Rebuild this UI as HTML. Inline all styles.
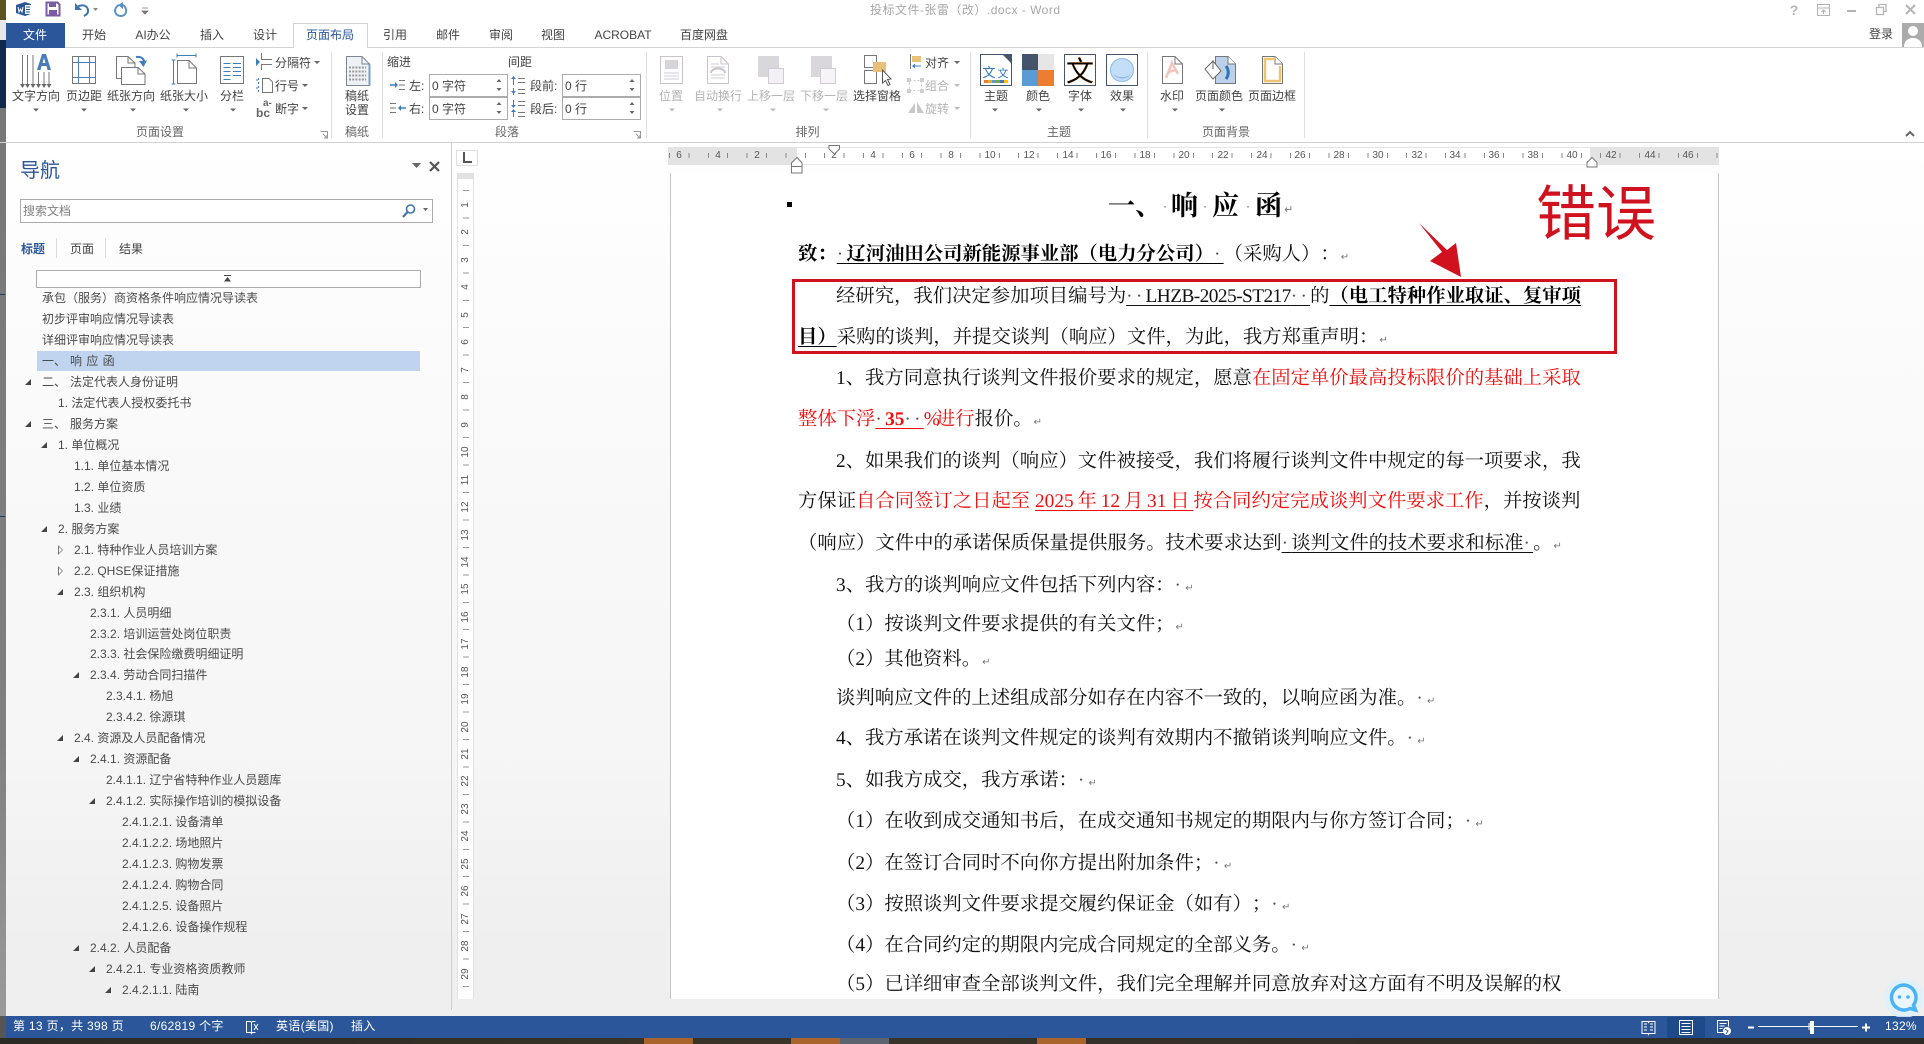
<!DOCTYPE html>
<html lang="zh-CN"><head><meta charset="utf-8"><title>投标文件-张雷（改）.docx - Word</title>
<style>
html,body{margin:0;padding:0;background:#fff}
body{width:1924px;height:1044px;position:relative;overflow:hidden;font-family:"Liberation Sans","Noto Sans CJK SC",sans-serif;font-size:12px;color:#444;text-spacing-trim:space-all}
.abs{position:absolute}
#bg{position:absolute;left:6px;top:143px;width:1918px;height:873px;background:linear-gradient(#fff 0,#fbfbfb 200px,#f8f8f8 400px,#f6f6f6 600px,#efefef 800px,#efefef 873px)}
svg text{font-family:"Liberation Sans","Noto Sans CJK SC",sans-serif;font-size:12px;fill:#444}
svg .c{text-anchor:middle}
svg .g{fill:#666}
svg .d{fill:#b4b4b4}
.t{position:absolute;white-space:pre;line-height:20px;height:20px}
#nav{position:absolute;left:0;top:288px;width:451px}
#nav div{height:20.97px;line-height:20px;white-space:pre;color:#4a4a4a;position:relative}
.l0{padding-left:42px}.l1{padding-left:58px}.l2{padding-left:74px}.l3{padding-left:90px}.l4{padding-left:106px}.l5{padding-left:122px}
i.a{position:absolute;top:7px;width:0;height:0;border-bottom:6px solid #444;border-left:6px solid transparent}
i.o{position:absolute;top:5px;width:0;height:0;border-top:5px solid transparent;border-bottom:5px solid transparent;border-left:5px solid #777}
i.o:after{content:"";position:absolute;left:-4px;top:-3px;border-top:3px solid transparent;border-bottom:3px solid transparent;border-left:3px solid #fafafa}
.w{display:inline-block;width:28px}
.ln{position:absolute;white-space:pre;height:30px;line-height:30px;margin-top:2px;font-family:"Liberation Serif","Noto Serif CJK SC",serif;font-size:19.35px;color:#111;text-rendering:geometricPrecision;text-spacing-trim:space-all;font-kerning:none}
.ln u{text-decoration:underline;text-decoration-thickness:1px;text-underline-offset:3px;text-decoration-skip-ink:none}
.ln b{font-weight:700;color:#000}
.r,.ln b.r{color:#f20d0d}
.p{letter-spacing:.167em;color:#555;font-weight:400}
.e{font-family:"DejaVu Sans",sans-serif;font-size:10px;color:#777;margin-left:1px;font-weight:400}
.ti{position:absolute;font-family:"Liberation Serif","Noto Serif CJK SC",serif;font-weight:700;font-size:27px;line-height:36px;color:#000;top:188px}
.hn{position:absolute;top:149px;font-size:10px;line-height:14px;width:20px;text-align:center;color:#555;margin-left:-10px}
.vn{position:absolute;left:456px;width:20px;text-align:center;font-size:10px;line-height:12px;color:#555;transform:rotate(-90deg);margin-top:-5px}
.s{position:absolute;top:1016px;line-height:20px;color:#fff;white-space:pre;letter-spacing:.3px}
</style></head><body>

<div id="bg"></div>
<div class="abs" style="left:0;top:0;width:6px;height:20px;background:#5c5424"></div>
<div class="abs" style="left:0;top:20px;width:6px;height:20px;background:#e8e8e8"></div>
<div class="abs" style="left:0;top:40px;width:6px;height:68px;background:#10294c"></div>
<div class="abs" style="left:0;top:108px;width:6px;height:908px;background:linear-gradient(#777,#808080 70%,#9a9a9a)"></div>
<div class="abs" style="left:0;top:294px;width:5px;height:1px;background:#1c3e78"></div>
<div class="abs" style="left:0;top:516px;width:5px;height:1px;background:#1c3e78"></div>

<!-- top: title + tabs + ribbon -->
<svg class="abs" style="left:0;top:0" width="1924" height="147" viewBox="0 0 1924 147" fill="none">
<!-- QAT -->
<path d="M16 5l9-3 6 2v10l-6 2-9-3z" fill="#2b579a"/><path d="M25 5h6v9h-6z" fill="#fff"/><path d="M26 7h4M26 9.500h4M26 12h4" stroke="#2b579a"/><path d="M18 7l1 5 1.500-3 1.500 3 1-5" stroke="#fff"/>
<path d="M46.500 2.500h11l2 2v11h-13z" stroke="#7a5ba6" stroke-width="2"/><path d="M49 3v4h7V3" fill="#7a5ba6"/><rect x="49" y="10" width="8" height="5" fill="#7a5ba6"/>
<path d="M76 9c3-5 11-5 12 1 .5 3-2 5-4 6" stroke="#3f75ad" stroke-width="2"/><path d="M75 3v7h7z" fill="#3f75ad"/><path d="M93 8h5l-2.500 3z" fill="#888"/>
<path d="M119 5c-6 3-5 11 2 11 6 0 7-8 2-11" stroke="#5a8fc8" stroke-width="2"/><path d="M123 2v7l-5-4z" fill="#5a8fc8"/>
<path d="M142 8h6M142 11h6l-3 3z" stroke="#777" fill="#777" stroke-width=".8"/>
<!-- title -->
<text x="870" y="14" textLength="190" style="fill:#a8a8a8">投标文件-张雷（改）.docx - Word</text>
<!-- window controls -->
<text x="1794" y="15" class="c" style="font-size:14px;font-weight:700;fill:#b4b4b4">?</text>
<path d="M1817.500 4.500h12v11h-12zM1818 8h12M1823.500 14v-4M1821.500 12l2-2 2 2" stroke="#b4b4b4"/>
<path d="M1847 11h9" stroke="#b4b4b4" stroke-width="2"/>
<path d="M1876.500 7.500h7v7h-7zM1879 7V4.500h7v7h-2.500" stroke="#b4b4b4" stroke-width="1.300"/>
<path d="M1906 5l9 9M1915 5l-9 9" stroke="#b4b4b4" stroke-width="2"/>
<!-- tabs -->
<path d="M6 47.500H293.500V23.500H367.500V47.500H1924" stroke="#d4d4d4"/>
<rect x="6" y="23" width="59" height="25" fill="#2b579a"/>
<text x="35" y="39" class="c" style="fill:#fff">文件</text>
<text x="94" y="39" class="c">开始</text><text x="153" y="39" class="c">AI办公</text><text x="212" y="39" class="c">插入</text><text x="265" y="39" class="c">设计</text>
<text x="330" y="39" class="c" style="fill:#2b579a">页面布局</text>
<text x="395" y="39" class="c">引用</text><text x="448" y="39" class="c">邮件</text><text x="501" y="39" class="c">审阅</text><text x="553" y="39" class="c">视图</text><text x="623" y="39" class="c">ACROBAT</text><text x="704" y="39" class="c">百度网盘</text>
<text x="1881" y="38" class="c">登录</text>
<rect x="1902" y="23" width="22" height="24" fill="#ababab"/><circle cx="1913" cy="31" r="5" fill="#fff"/><path d="M1904 47c0-6 4-9 9-9s9 3 9 9z" fill="#fff"/>
<path d="M1906 136l4-4 4 4" stroke="#666" stroke-width="2"/>
<path d="M0 142.500H1924" stroke="#d2d2d2"/>
<!-- separators -->
<path d="M331.500 52V138M382.500 52V138M646.500 52V138M970.500 52V138M1147.500 52V138M1304.500 52V138" stroke="#e0e0e0"/>

<!-- 文字方向 -->
<path d="M22.500 55V85M27.500 55V85M33 55V85M38.500 72V85M44 72V85M49 72V85" stroke="#777"/>
<path d="M20 84h5l-2.500 4zM25 84h5l-2.500 4zM30.500 84h5l-2.500 4zM36 84h5l-2.500 4zM41.500 84h5l-2.500 4zM46.500 84h5l-2.500 4z" fill="#666"/>
<path fill-rule="evenodd" d="M37 70L42 54H46L51 70H47.500L46.500 66H41.500L40.500 70zM42.500 63H45.500L44 58z" fill="#4a7ebb"/>
<text x="36" y="100" class="c">文字方向</text><path d="M33 108.500h6l-3 3z" fill="#666"/>
<!-- 页边距 -->
<rect x="72.500" y="56.500" width="23" height="27" stroke="#777"/><path d="M78.500 57V83M89.500 57V83M73 62.500H95M73 77.500H95" stroke="#4a7ebb"/>
<text x="84" y="100" class="c">页边距</text><path d="M81 108.500h6l-3 3z" fill="#666"/>
<!-- 纸张方向 -->
<path d="M121 78.500H116.500V56.500H128L135 63V67M128 56.500V63H135M121.500 67.500H138L145 74V84.500H121.500ZM138 67.500V74H145" stroke="#777"/>
<path d="M136 57C142 56 145 60 143.500 63" stroke="#3f7fbf" stroke-width="2"/><path d="M139 61L143.500 67L147 60.500z" fill="#3f7fbf"/>
<text x="131" y="100" class="c">纸张方向</text><path d="M130 108.500h6l-3 3z" fill="#666"/>
<!-- 纸张大小 -->
<path d="M177.500 60.500H189L196.500 68V83.500H177.500ZM189 60.500V68H196.500" stroke="#777"/>
<path d="M177 55.500H196M177 53.500V57.500M196 53.500V57.500M173.500 60V84M171.500 60H175.500M171.500 84H175.500" stroke="#3f7fbf"/>
<text x="184" y="100" class="c">纸张大小</text><path d="M183 108.500h6l-3 3z" fill="#666"/>
<!-- 分栏 -->
<rect x="220.500" y="56.500" width="23" height="27" stroke="#777"/><path d="M223.500 63.500H230.500M233 63.500H241M223.500 67.500H230.500M233 67.500H241M223.500 71.500H230.500M233 71.500H241M223.500 75.500H230.500M233 75.500H241M223.500 79.500H230.500" stroke="#3f7fbf"/>
<text x="232" y="100" class="c">分栏</text><path d="M230 108.500h6l-3 3z" fill="#666"/>
<!-- small -->
<path d="M261.500 53V59.500H272M261.500 70V64.500H272" stroke="#777"/><path d="M256 58L260 62L256 66z" fill="#3f7fbf"/>
<text x="275" y="67">分隔符</text><path d="M314 61h6l-3 3z" fill="#666"/>
<path d="M258.500 78v2M258.500 82v2M258.500 86v2M258.500 90v2M256 80h2M256 88h2" stroke="#3f7fbf"/><path d="M262.500 78.500H269L272.500 82V92.500H262.500Z" stroke="#777"/>
<text x="275" y="90">行号</text><path d="M302 84h6l-3 3z" fill="#666"/>
<text x="256" y="117" style="font-size:12px;font-weight:700;fill:#666">bc</text><text x="263" y="106" style="font-size:10px;font-weight:700;fill:#666">a-</text>
<text x="275" y="113">断字</text><path d="M302 107h6l-3 3z" fill="#666"/>
<text x="160" y="136" class="c g">页面设置</text>
<path d="M320.500 131.500h7v7M323 134l4 4M327 135v3h-3" stroke="#999"/>
<!-- 稿纸 -->
<path d="M346.500 56.500H362L369.500 64V85.500H346.500Z" fill="#eef1f6" stroke="#7d8794"/><path d="M362 56.500V64H369.500" stroke="#7d8794"/><path d="M369.500 64V85.500" stroke="#7aa0cc" stroke-width="2"/>
<path d="M349 67.500h17M349 71.500h17M349 75.500h17M349 79.500h17" stroke="#9a9a9a" stroke-width="2" stroke-dasharray="2 1.200"/>
<text x="357" y="100" class="c">稿纸</text><text x="357" y="114" class="c">设置</text>
<text x="357" y="136" class="c g">稿纸</text>
<!-- 段落 -->
<text x="387" y="66">缩进</text><text x="508" y="66">间距</text>
<path d="M390 85h6" stroke="#3f7fbf" stroke-width="1.500"/><path d="M395 82v6l3-3z" fill="#3f7fbf"/><path d="M399 80.500h6M399 85h6M399 89.500h6" stroke="#777"/>
<text x="409" y="90">左:</text>
<rect x="429.500" y="74.500" width="78" height="22" fill="#fff" stroke="#ababab"/><text x="432" y="90">0 字符</text><path d="M496.500 82l2.500-3 2.500 3zM496.500 88l2.500 3 2.500-3z" fill="#666"/>
<path d="M390 103.500h6M390 108h6M390 112.500h6" stroke="#777"/><path d="M400 108h6" stroke="#3f7fbf" stroke-width="1.500"/><path d="M401 105v6l-3-3z" fill="#3f7fbf"/>
<text x="409" y="113">右:</text>
<rect x="429.500" y="97.500" width="78" height="22" fill="#fff" stroke="#ababab"/><text x="432" y="113">0 字符</text><path d="M496.500 105l2.500-3 2.500 3zM496.500 111l2.500 3 2.500-3z" fill="#666"/>
<path d="M513.500 78v7M513.500 88v7" stroke="#3f7fbf"/><path d="M511 79l2.500-3 2.500 3zM511 91l2.500 3 2.500-3z" fill="#3f7fbf"/><path d="M518 78.500h7M518 82.500h7M518 89.500h7M518 93.500h7" stroke="#777"/>
<text x="530" y="90">段前:</text>
<rect x="562.500" y="74.500" width="78" height="22" fill="#fff" stroke="#ababab"/><text x="565" y="90">0 行</text><path d="M629.500 82l2.500-3 2.500 3zM629.500 88l2.500 3 2.500-3z" fill="#666"/>
<path d="M513.500 100v6M513.500 111v6" stroke="#3f7fbf"/><path d="M511 105l2.500 3 2.500-3zM511 112l2.500-3 2.500 3z" fill="#3f7fbf"/><path d="M518 101.500h7M518 105.500h7M518 112.500h7M518 116.500h7" stroke="#777"/>
<text x="530" y="113">段后:</text>
<rect x="562.500" y="97.500" width="78" height="22" fill="#fff" stroke="#ababab"/><text x="565" y="113">0 行</text><path d="M629.500 105l2.500-3 2.500 3zM629.500 111l2.500 3 2.500-3z" fill="#666"/>
<text x="507" y="136" class="c g">段落</text>
<path d="M633.500 131.500h7v7M636 134l4 4M640 135v3h-3" stroke="#999"/>
<!-- 排列 -->
<rect x="660.500" y="56.500" width="22" height="27" stroke="#c8c4cc"/><rect x="665" y="60" width="13" height="9" fill="#d8d4dc"/><path d="M664 73h15M664 76h15M664 79h15" stroke="#d0ccd4"/>
<text x="671" y="100" class="c d">位置</text><path d="M669 108.500h6l-3 3z" fill="#bbb"/>
<path d="M707.500 56.500H721L728.500 64V83.500H707.500ZM721 56.500V64H728.500" stroke="#c8c4cc"/><path d="M711 64h8M711 67h14M711 78h14M711 75h14" stroke="#d0ccd4"/><path d="M711 73c0-6 14-6 14 0" stroke="#c8c4cc" stroke-width="2"/>
<text x="718" y="100" class="c d">自动换行</text><path d="M717 108.500h6l-3 3z" fill="#bbb"/>
<rect x="758" y="56" width="21" height="21" fill="#dad7dc"/><rect x="768.500" y="68.500" width="15" height="15" fill="#f3f1f5" stroke="#cfccd3"/>
<text x="771" y="100" class="c d">上移一层</text><path d="M770 108.500h6l-3 3z" fill="#bbb"/>
<rect x="811" y="56" width="21" height="21" fill="#dad7dc"/><rect x="820.500" y="68.500" width="15" height="15" fill="#f6f4f7" stroke="#cfccd3"/>
<text x="824" y="100" class="c d">下移一层</text><path d="M823 108.500h6l-3 3z" fill="#bbb"/>
<rect x="864.500" y="55.500" width="12" height="12" stroke="#777"/><rect x="864.500" y="70.500" width="12" height="13" stroke="#777"/><rect x="873" y="62" width="13" height="10" fill="#e9c176"/>
<path d="M882.500 70V83L885.500 80.500L888 85.500L890 84.500L887.500 79.500L891 79Z" fill="#fff" stroke="#555"/>
<text x="877" y="100" class="c">选择窗格</text>
<path d="M910.500 54V69" stroke="#777"/><rect x="912" y="56" width="9" height="6" fill="#e9c176"/><path d="M914 66h7" stroke="#3f7fbf"/><path d="M915 63.500v5l-3-2.500z" fill="#3f7fbf"/>
<text x="925" y="67">对齐</text><path d="M954 61h6l-3 3z" fill="#666"/>
<rect x="909.500" y="80.500" width="12" height="10" stroke="#c8c8c8" stroke-dasharray="2 2"/><rect x="907" y="78" width="4" height="4" fill="#d0d0d0"/><rect x="920" y="78" width="4" height="4" fill="#d0d0d0"/><rect x="907" y="89" width="4" height="4" fill="#d0d0d0"/><rect x="920" y="89" width="4" height="4" fill="#d0d0d0"/>
<text x="925" y="90" class="d">组合</text><path d="M954 84h6l-3 3z" fill="#bbb"/>
<path d="M908 113L915 103V113zM917 113V102L924 113z" fill="#c8c8c8"/>
<text x="925" y="113" class="d">旋转</text><path d="M954 107h6l-3 3z" fill="#bbb"/>
<text x="807.500" y="136" class="c g">排列</text>
<!-- 主题 -->
<rect x="980.500" y="54.500" width="31" height="31" fill="#fff" stroke="#44546a" stroke-width="1"/><path d="M1003 55H1011V63z" fill="#44546a"/>
<text x="989" y="77" class="c" style="font-size:13px;fill:#2e74b5">文</text><text x="1003" y="77" class="c" style="font-size:11px;fill:#2e74b5">文</text>
<path d="M984 80h4v3h-4z" fill="#ed7d31"/><path d="M988 80h4v3h-4z" fill="#e0b030"/><path d="M992 80h4v3h-4z" fill="#5b9bd5"/><path d="M996 80h4v3h-4z" fill="#70ad47"/><path d="M1000 80h4v3h-4z" fill="#4472c4"/><path d="M1004 80h4v3h-4z" fill="#ffc000"/>
<text x="996" y="100" class="c">主题</text><path d="M992 108.500h6l-3 3z" fill="#666"/>
<rect x="1022" y="54" width="16" height="16" fill="#44546a"/><rect x="1038" y="54" width="16" height="16" fill="#e7e6e6"/><rect x="1022" y="70" width="16" height="16" fill="#5b9bd5"/><rect x="1038" y="70" width="16" height="16" fill="#ed7d31"/>
<text x="1038" y="100" class="c">颜色</text><path d="M1036 108.500h6l-3 3z" fill="#666"/>
<rect x="1064.500" y="54.500" width="31" height="31" fill="#fff" stroke="#44546a"/><text x="1080" y="81" class="c" style="font-size:28px;fill:#000;stroke:#d88030;stroke-width:.3px">文</text>
<text x="1080" y="100" class="c">字体</text><path d="M1078 108.500h6l-3 3z" fill="#666"/>
<rect x="1106.500" y="54.500" width="31" height="31" fill="#fff" stroke="#44546a"/><circle cx="1122" cy="70" r="11.500" fill="#c4defa" stroke="#8ab8e8"/><path d="M1113 74a11 11 0 0 0 18 0a14 14 0 0 1-18 0z" fill="#8ab8e8"/>
<text x="1122" y="100" class="c">效果</text><path d="M1120 108.500h6l-3 3z" fill="#666"/>
<text x="1059" y="136" class="c g">主题</text>
<!-- 页面背景 -->
<path d="M1162.500 56.500H1175L1182.500 64V83.500H1162.500ZM1175 56.500V64H1182.500" fill="#fff" stroke="#777"/><path d="M1166 78L1172 63L1178 74M1168 72L1176 70" stroke="#f2c4bc" stroke-width="2.500"/>
<text x="1172" y="100" class="c">水印</text><path d="M1172 108.500h6l-3 3z" fill="#666"/>
<path d="M1215.500 56.500H1228L1235.500 64V83.500H1215.500Z" fill="#bdd0e9" stroke="#777"/><path d="M1228 56.500V64H1235.500" fill="#fff" stroke="#777"/>
<path d="M1205 69L1213 61L1221 71L1213 79Z" fill="#fff" stroke="#666"/><path d="M1213 60V69" stroke="#666"/><path d="M1226 66c3 4 3 9 0 13" stroke="#2e74b5" stroke-width="3"/>
<text x="1219" y="100" class="c">页面颜色</text><path d="M1219 108.500h6l-3 3z" fill="#666"/>
<path d="M1262.500 56.500H1275L1282.500 64V83.500H1262.500Z" fill="#fff" stroke="#777"/><path d="M1275 56.500V64H1282.500" fill="#fff" stroke="#777"/><path d="M1275 59H1265V81H1280V66" stroke="#edc473" stroke-width="2.500"/>
<text x="1272" y="100" class="c">页面边框</text>
<text x="1226" y="136" class="c g">页面背景</text>
</svg>

<!-- navigation pane -->
<div class="t" style="left:20px;top:157px;font-size:20px;line-height:28px;height:28px;color:#2b579a">导航</div>
<svg class="abs" style="left:410px;top:160px" width="32" height="14" fill="none"><path d="M2 3h9l-4.500 5z" fill="#666"/><path d="M20 2l9 9M29 2l-9 9" stroke="#555" stroke-width="2.200"/></svg>
<div class="abs" style="left:20px;top:199px;width:411px;height:22px;border:1px solid #ababab;background:#fff"></div>
<div class="t" style="left:23px;top:201px;color:#808080">搜索文档</div>
<svg class="abs" style="left:400px;top:203px" width="32" height="16" fill="none"><circle cx="10.500" cy="6" r="4" stroke="#3f75ad" stroke-width="1.600"/><path d="M7.500 9L3 14" stroke="#3f75ad" stroke-width="2.200"/><path d="M23 5h5l-2.500 3z" fill="#666"/></svg>
<div class="t" style="left:21px;top:239px;color:#2b579a;font-weight:700">标题</div>
<div class="t" style="left:70px;top:239px">页面</div>
<div class="t" style="left:119px;top:239px">结果</div>
<div class="abs" style="left:56px;top:238px;width:1px;height:20px;background:#ddd"></div>
<div class="abs" style="left:105px;top:238px;width:1px;height:20px;background:#ddd"></div>
<div class="abs" style="left:36px;top:270px;width:383px;height:16px;border:1px solid #ababab;background:#fff"></div>
<svg class="abs" style="left:223px;top:275px" width="9" height="8"><path d="M1 .5h7" stroke="#444"/><path d="M1 6.500L4.500 2L8 6.500z" fill="#444"/></svg>
<div class="abs" style="left:37px;top:351px;width:383px;height:20px;background:#c0d4f0"></div>
<div id="nav">
<div class="l0">承包（服务）商资格条件响应情况导读表</div>
<div class="l0">初步评审响应情况导读表</div>
<div class="l0">详细评审响应情况导读表</div>
<div class="l0"><span class="w">一、</span><span style="word-spacing:1px">响 应 函</span></div>
<div class="l0"><i class="a" style="left:25px"></i><span class="w">二、</span>法定代表人身份证明</div>
<div class="l1">1. 法定代表人授权委托书</div>
<div class="l0"><i class="a" style="left:25px"></i><span class="w">三、</span>服务方案</div>
<div class="l1"><i class="a" style="left:41px"></i>1. 单位概况</div>
<div class="l2">1.1. 单位基本情况</div>
<div class="l2">1.2. 单位资质</div>
<div class="l2">1.3. 业绩</div>
<div class="l1"><i class="a" style="left:41px"></i>2. 服务方案</div>
<div class="l2"><i class="o" style="left:58px"></i>2.1. 特种作业人员培训方案</div>
<div class="l2"><i class="o" style="left:58px"></i>2.2. QHSE保证措施</div>
<div class="l2"><i class="a" style="left:57px"></i>2.3. 组织机构</div>
<div class="l3">2.3.1. 人员明细</div>
<div class="l3">2.3.2. 培训运营处岗位职责</div>
<div class="l3">2.3.3. 社会保险缴费明细证明</div>
<div class="l3"><i class="a" style="left:73px"></i>2.3.4. 劳动合同扫描件</div>
<div class="l4">2.3.4.1. 杨旭</div>
<div class="l4">2.3.4.2. 徐源琪</div>
<div class="l2"><i class="a" style="left:57px"></i>2.4. 资源及人员配备情况</div>
<div class="l3"><i class="a" style="left:73px"></i>2.4.1. 资源配备</div>
<div class="l4">2.4.1.1. 辽宁省特种作业人员题库</div>
<div class="l4"><i class="a" style="left:89px"></i>2.4.1.2. 实际操作培训的模拟设备</div>
<div class="l5">2.4.1.2.1. 设备清单</div>
<div class="l5">2.4.1.2.2. 场地照片</div>
<div class="l5">2.4.1.2.3. 购物发票</div>
<div class="l5">2.4.1.2.4. 购物合同</div>
<div class="l5">2.4.1.2.5. 设备照片</div>
<div class="l5">2.4.1.2.6. 设备操作规程</div>
<div class="l3"><i class="a" style="left:73px"></i>2.4.2. 人员配备</div>
<div class="l4"><i class="a" style="left:89px"></i>2.4.2.1. 专业资格资质教师</div>
<div class="l5"><i class="a" style="left:105px"></i>2.4.2.1.1. 陆南</div>
</div>
<div class="abs" style="left:451px;top:143px;width:1px;height:867px;background:#cfcfcf"></div>

<!-- L button + vertical ruler -->
<div class="abs" style="left:456px;top:150px;width:20px;height:14px;border:1px solid #e0e0e0;background:#fff"></div>
<div class="abs" style="left:463px;top:152px;width:7px;height:9px;border-left:2px solid #555;border-bottom:2px solid #555"></div>
<div class="abs" style="left:457px;top:173px;width:17px;height:826px;background:#fff;border-left:1px solid #e2e2e2;border-right:1px solid #e2e2e2;box-sizing:border-box"></div>
<div class="abs" style="left:457px;top:173px;width:17px;height:6px;background:#e2e2e2"></div>
<div class="abs" style="left:463px;top:190px;width:6px;height:809px;background:repeating-linear-gradient(to bottom,#999 0,#999 1px,transparent 1px,transparent 27.45px)"></div>
<div class="vn" style="top:204px">1</div><div class="vn" style="top:231px">2</div><div class="vn" style="top:259px">3</div><div class="vn" style="top:286px">4</div><div class="vn" style="top:314px">5</div><div class="vn" style="top:341px">6</div><div class="vn" style="top:369px">7</div><div class="vn" style="top:396px">8</div><div class="vn" style="top:424px">9</div><div class="vn" style="top:451px">10</div><div class="vn" style="top:479px">11</div><div class="vn" style="top:506px">12</div><div class="vn" style="top:534px">13</div><div class="vn" style="top:561px">14</div><div class="vn" style="top:588px">15</div><div class="vn" style="top:616px">16</div><div class="vn" style="top:643px">17</div><div class="vn" style="top:671px">18</div><div class="vn" style="top:698px">19</div><div class="vn" style="top:726px">20</div><div class="vn" style="top:753px">21</div><div class="vn" style="top:780px">22</div><div class="vn" style="top:808px">23</div><div class="vn" style="top:835px">24</div><div class="vn" style="top:863px">25</div><div class="vn" style="top:890px">26</div><div class="vn" style="top:918px">27</div><div class="vn" style="top:945px">28</div><div class="vn" style="top:973px">29</div>

<!-- horizontal ruler -->
<div class="abs" style="left:668px;top:147px;width:1051px;height:18px;background:#fff;border-top:1px solid #e4e4e4;border-bottom:1px solid #e4e4e4;box-sizing:border-box"></div>
<div class="abs" style="left:668px;top:147px;width:129px;height:18px;background:#e3e3e3"></div>
<div class="abs" style="left:1590px;top:147px;width:129px;height:18px;background:#e3e3e3"></div>
<div class="abs" style="left:669px;top:153px;width:1050px;height:5px;background:repeating-linear-gradient(to right,#8a8a8a 0,#8a8a8a 1px,transparent 1px,transparent 19.4px)"></div>
<div class="hn" style="left:679px">6</div><div class="hn" style="left:718px">4</div><div class="hn" style="left:757px">2</div>
<div class="hn" style="left:834px">2</div><div class="hn" style="left:873px">4</div><div class="hn" style="left:912px">6</div><div class="hn" style="left:951px">8</div><div class="hn" style="left:990px">10</div><div class="hn" style="left:1029px">12</div><div class="hn" style="left:1068px">14</div><div class="hn" style="left:1106px">16</div><div class="hn" style="left:1145px">18</div><div class="hn" style="left:1184px">20</div><div class="hn" style="left:1223px">22</div><div class="hn" style="left:1262px">24</div><div class="hn" style="left:1300px">26</div><div class="hn" style="left:1339px">28</div><div class="hn" style="left:1378px">30</div><div class="hn" style="left:1417px">32</div><div class="hn" style="left:1455px">34</div><div class="hn" style="left:1494px">36</div><div class="hn" style="left:1533px">38</div><div class="hn" style="left:1572px">40</div><div class="hn" style="left:1611px">42</div><div class="hn" style="left:1650px">44</div><div class="hn" style="left:1688px">46</div>

<!-- page -->
<div class="abs" style="left:670px;top:173px;width:1049px;height:826px;background:#fff;border-left:1px solid #c6c6c6;border-right:1px solid #c6c6c6;box-sizing:border-box"></div>
<svg class="abs" style="left:780px;top:143px;overflow:visible" width="20" height="32" fill="none">
<path d="M49 2.500H59.500V6L54.500 11L49 6Z" fill="#fff" stroke="#777"/>
<path d="M17 14.500L22 20V30H11.500V20Z" fill="#fff" stroke="#777"/><path d="M11.500 23.500H22" stroke="#777"/>
<path d="M812 14.500L817 19.500V24H807V19.500Z" fill="#fff" stroke="#777"/>
</svg>

<!-- document -->
<div class="abs" style="left:787px;top:202px;width:5px;height:5px;background:#000"></div>
<div class="ti" style="left:1108px">一</div><div class="ti" style="left:1135px">、</div><div class="ti" style="left:1171px">响</div><div class="ti" style="left:1212px">应</div><div class="ti" style="left:1255px">函</div>
<div class="abs" style="left:1163px;top:199px;font-size:12px;line-height:14px;color:#555">·</div><div class="abs" style="left:1203px;top:199px;font-size:12px;line-height:14px;color:#555">·</div><div class="abs" style="left:1246px;top:199px;font-size:12px;line-height:14px;color:#555">·</div>
<div class="abs" style="left:1284px;top:203px;font-family:'DejaVu Sans',sans-serif;font-size:11px;line-height:14px;color:#777">↵</div>

<div class="ln" style="left:798px;top:238px"><b>致：<u><span class="p">·</span>辽河油田公司新能源事业部（电力分公司）<span class="p">·</span></u></b>（采购人）：<span class="e">↵</span></div>
<div class="ln" style="left:836px;top:280px">经研究，我们决定参加项目编号为<u><span class="p">··</span><span style="letter-spacing:-.029em">LHZB-2025-ST217</span><span class="p">··</span></u>的<b><u>（电工特种作业取证、复审项</u></b></div>
<div class="ln" style="left:798px;top:321px"><b><u>目）</u></b>采购的谈判，并提交谈判（响应）文件，为此，我方郑重声明：<span class="e">↵</span></div>
<div class="ln" style="left:836px;top:362px">1、我方同意执行谈判文件报价要求的规定，愿意<span class="r">在固定单价最高投标限价的基础上采取</span></div>
<div class="ln" style="left:798px;top:403px"><span class="r">整体下浮<u><span class="p">·</span><b class="r">35</b><span class="p">··</span></u><span style="letter-spacing:-4px">%</span>进行</span>报价。<span class="e">↵</span></div>
<div class="ln" style="left:836px;top:445px">2、如果我们的谈判（响应）文件被接受，我们将履行谈判文件中规定的每一项要求，我</div>
<div class="ln" style="left:798px;top:485px">方保证<span class="r">自合同签订之日起至 <u style="word-spacing:-1px">2025 年 12 月 31 日 </u>按合同约定完成谈判文件要求工作</span>，并按谈判</div>
<div class="ln" style="left:798px;top:527px">（响应）文件中的承诺保质保量提供服务。技术要求达到<u><span class="p">·</span>谈判文件的技术要求和标准<span class="p">·</span></u>。<span class="e">↵</span></div>
<div class="ln" style="left:836px;top:569px">3、我方的谈判响应文件包括下列内容：<span class="p">·</span><span class="e">↵</span></div>
<div class="ln" style="left:836px;top:608px">（1）按谈判文件要求提供的有关文件；<span class="e">↵</span></div>
<div class="ln" style="left:836px;top:643px">（2）其他资料。<span class="e">↵</span></div>
<div class="ln" style="left:836px;top:682px">谈判响应文件的上述组成部分如存在内容不一致的，以响应函为准。<span class="p">·</span><span class="e">↵</span></div>
<div class="ln" style="left:836px;top:722px">4、我方承诺在谈判文件规定的谈判有效期内不撤销谈判响应文件。<span class="p">·</span><span class="e">↵</span></div>
<div class="ln" style="left:836px;top:764px">5、如我方成交，我方承诺：<span class="p">·</span><span class="e">↵</span></div>
<div class="ln" style="left:836px;top:805px">（1）在收到成交通知书后，在成交通知书规定的期限内与你方签订合同；<span class="p">·</span><span class="e">↵</span></div>
<div class="ln" style="left:836px;top:847px">（2）在签订合同时不向你方提出附加条件；<span class="p">·</span><span class="e">↵</span></div>
<div class="ln" style="left:836px;top:888px">（3）按照谈判文件要求提交履约保证金（如有）；<span class="p">·</span><span class="e">↵</span></div>
<div class="ln" style="left:836px;top:929px">（4）在合同约定的期限内完成合同规定的全部义务。<span class="p">·</span><span class="e">↵</span></div>
<div class="ln" style="left:836px;top:968px">（5）已详细审查全部谈判文件，我们完全理解并同意放弃对这方面有不明及误解的权</div>

<!-- annotations -->
<div class="abs" style="left:792px;top:279px;width:825px;height:75px;border:3px solid #d0121f;box-sizing:border-box"></div>
<svg class="abs" style="left:0;top:0" width="1924" height="300"><polygon points="1419,223 1447,250 1456,243 1461,277 1430,261 1442,252" fill="#d0121f"/></svg>
<div class="abs" style="left:1536px;top:169px;font-family:'Noto Sans CJK SC',sans-serif;font-size:60px;line-height:82px;color:#d0121f;white-space:pre">错误</div>

<!-- status bar -->
<div class="abs" style="left:6px;top:1016px;width:1918px;height:22px;background:#2b579a"></div>
<div class="abs" style="left:0;top:1016px;width:6px;height:28px;background:#555"></div>
<div class="abs" style="left:0;top:1038px;width:1924px;height:6px;background:linear-gradient(to right,#2c2a24,#3a3428 40%,#2d2a28)"></div>
<div class="abs" style="left:644px;top:1038px;width:49px;height:6px;background:#a9642c"></div>
<div class="abs" style="left:791px;top:1038px;width:49px;height:6px;background:#a9642c"></div>
<div class="abs" style="left:840px;top:1038px;width:49px;height:6px;background:#5c6470"></div>
<div class="abs" style="left:1037px;top:1038px;width:49px;height:6px;background:#a9642c"></div>
<div class="s" style="left:13px">第 13 页，共 398 页</div>
<div class="s" style="left:150px">6/62819 个字</div>
<div class="s" style="left:276px">英语(美国)</div>
<div class="s" style="left:351px">插入</div>
<div class="abs" style="left:1667px;top:1017px;width:38px;height:21px;background:#1f4a8a"></div>
<svg class="abs" style="left:0;top:1016px" width="1924" height="22" fill="none">
<path d="M246.500 5.500h4l1 1v11l-1-1h-4zM251.500 6.500l1-1h3M251.500 17.500l1-1h3" stroke="#fff"/><path d="M254 8l4 6M258 8l-4 6" stroke="#fff"/>
<path d="M1642 5.500h6l.5 1 .5-1h6v12h-6l-.5 1-.5-1h-6zM1644 8h3M1644 11h3M1644 14h3M1650 8h3M1650 11h3M1650 14h3" stroke="#fff"/>
<rect x="1679.500" y="4.500" width="13" height="14" stroke="#fff"/><path d="M1681.500 7.500h9M1681.500 10.500h9M1681.500 13.500h9M1681.500 16.500h9" stroke="#fff"/>
<path d="M1725 16.500h-7.500v-12h11v6M1719.500 7.500h7M1719.500 10h5M1719.500 12.500h3" stroke="#fff"/><circle cx="1727" cy="15" r="4" fill="#fff"/><path d="M1725 13l3 2-2 3" stroke="#2b579a"/>
<path d="M1748 11.500h6" stroke="#fff" stroke-width="2"/>
<path d="M1758 10.500h100" stroke="#fff"/><path d="M1809 7v7" stroke="#fff"/><rect x="1810" y="5" width="4" height="13" fill="#fff"/>
<path d="M1862 11.500h8M1866 7.500v8" stroke="#fff" stroke-width="2"/>
</svg>
<div class="s" style="left:1885px;font-size:12px">132%</div>

<!-- chat bubble -->
<svg class="abs" style="left:1881px;top:975px" width="42" height="42" fill="none">
<circle cx="23" cy="23" r="20" fill="#dff0fb" fill-opacity=".85"/>
<path d="M23 10a12.500 12.500 0 1 0 6 23.500l5.500 1.500-2-5A12.500 12.500 0 0 0 23 10z" fill="#eaf6ff" stroke="#4cb3f6" stroke-width="3.500"/>
<circle cx="18.500" cy="22" r="1.800" fill="#4cb3f6"/><circle cx="27" cy="22" r="1.800" fill="#4cb3f6"/>
</svg>
</body></html>
